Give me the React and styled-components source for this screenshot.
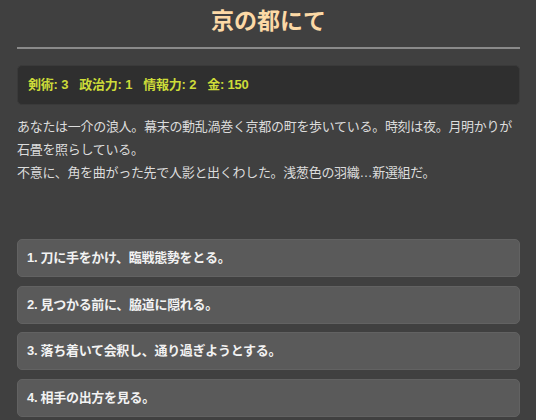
import React from 'react';
import styled, { createGlobalStyle } from 'styled-components';

const GlobalStyle = createGlobalStyle`
  body {
    margin: 0;
    background: #404040;
    font-family: "Liberation Sans", "Noto Sans CJK JP", sans-serif;
  }
`;

const Page = styled.div`
  padding: 0 16px 0 17px;
`;

const Title = styled.h1`
  margin: 0;
  padding-top: 6px;
  font-size: 23px;
  line-height: 30px;
  text-align: center;
  color: #fcd9a6;
  font-weight: bold;
`;

const Rule = styled.hr`
  margin: 11px 0 0;
  border: 0;
  border-top: 2px solid #8a8a8a;
`;

const StatsBox = styled.div`
  margin-top: 16px;
  display: flex;
  gap: 11px;
  padding: 10px;
  background: #2f2f2f;
  border: 1px solid #3a3a3a;
  border-radius: 5px;
  font-size: 13px;
  line-height: 18px;
  letter-spacing: -0.2px;
  font-weight: bold;
  color: #cddc39;
`;

const Story = styled.p`
  margin: 10px 0 0;
  max-width: 497px;
  font-size: 13px;
  line-height: 23px;
  letter-spacing: -0.3px;
  color: #dcdcdc;
`;

const Choices = styled.div`
  margin-top: 55px;
  display: flex;
  flex-direction: column;
  gap: 8.5px;
`;

const Choice = styled.button`
  display: block;
  width: 100%;
  text-align: left;
  padding: 10px 9px;
  background: #5a5a5a;
  border: 1px solid #626262;
  border-radius: 5px;
  font-family: inherit;
  font-size: 13px;
  line-height: 16px;
  letter-spacing: -0.3px;
  font-weight: bold;
  color: #f2f2f2;
  cursor: pointer;
`;

const stats = [
  ['剣術', 3],
  ['政治力', 1],
  ['情報力', 2],
  ['金', 150],
];

const choices = [
  '刀に手をかけ、臨戦態勢をとる。',
  '見つかる前に、脇道に隠れる。',
  '落ち着いて会釈し、通り過ぎようとする。',
  '相手の出方を見る。',
];

const App = () => (
  <Page>
    <GlobalStyle />
    <Title>京の都にて</Title>
    <Rule />
    <StatsBox>
      {stats.map(([name, value]) => (
        <span key={name}>{name}: {value}</span>
      ))}
    </StatsBox>
    <Story>
      あなたは一介の浪人。幕末の動乱渦巻く京都の町を歩いている。時刻は夜。月明かりが石畳を照らしている。
      <br />
      不意に、角を曲がった先で人影と出くわした。浅葱色の羽織…新選組だ。
    </Story>
    <Choices>
      {choices.map((text, i) => (
        <Choice key={i}>{i + 1}. {text}</Choice>
      ))}
    </Choices>
  </Page>
);

export default App;
